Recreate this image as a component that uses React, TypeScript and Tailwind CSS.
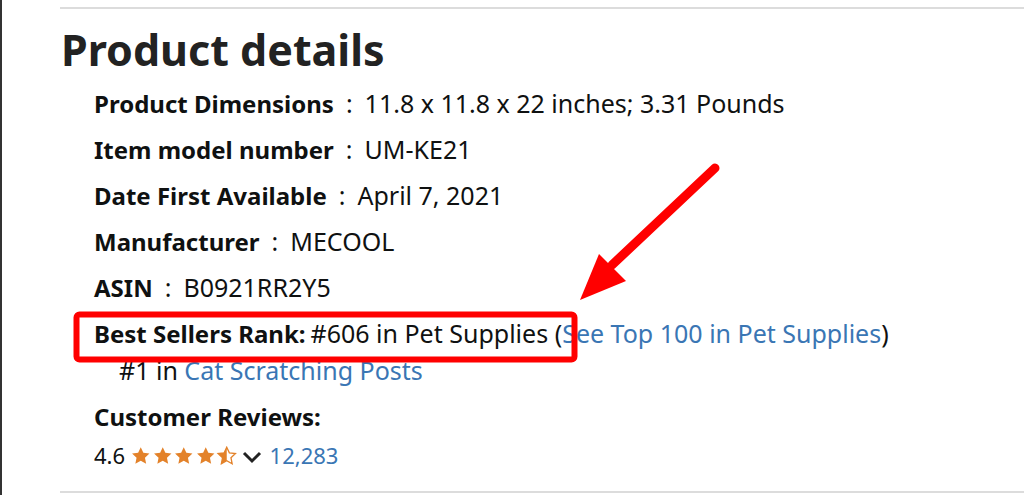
import React from "react";

const font = { fontFamily: '"Noto Sans", "Open Sans", Arial, sans-serif' };

function Star({ half }: { half?: boolean }) {
  const d =
    "M10 1.2l2.6 5.6 6.1.7-4.5 4.2 1.2 6-5.4-3-5.4 3 1.2-6L1.3 7.5l6.1-.7z";
  return (
    <svg width="21.5" height="19" viewBox="0 0 20 19">
      <defs>
        <clipPath id="halfclip">
          <rect x="0" y="0" width="10" height="19" />
        </clipPath>
      </defs>
      {half ? (
        <>
          <path d={d} fill="none" stroke="#e3822a" strokeWidth="1.3" />
          <path d={d} fill="#e3822a" clipPath="url(#halfclip)" />
        </>
      ) : (
        <path d={d} fill="#e3822a" />
      )}
    </svg>
  );
}

function Row({ label, value }: { label: string; value: string }) {
  return (
    <div className="flex h-[46px] items-center text-[24px] text-[#0f1111]">
      <span className="font-bold">{label}</span>
      <span className="mx-[12px] text-[25px]">:</span>
      <span className="text-[25px]">{value}</span>
    </div>
  );
}

export default function App() {
  return (
    <div
      className="relative w-[1024px] h-[495px] bg-white overflow-hidden border-l-2 border-[#333]"
      style={font}
    >
      <div className="ml-[58px] mt-[7px] border-t-2 border-[#dcdcdc] h-[486px] border-b-2 flex flex-col">
        <h2 className="text-[43px] font-bold text-[#222] leading-none mt-[19px] ml-[1px]">
          Product details
        </h2>
        <div className="ml-[34px] mt-[10px]">
          <Row label="Product Dimensions" value="11.8 x 11.8 x 22 inches; 3.31 Pounds" />
          <Row label="Item model number" value="UM-KE21" />
          <Row label="Date First Available" value="April 7, 2021" />
          <Row label="Manufacturer" value="MECOOL" />
          <Row label="ASIN" value="B0921RR2Y5" />
          <div className="flex h-[46px] items-center text-[25px] text-[#0f1111]">
            <span className="font-bold text-[24px]">Best Sellers Rank:</span>
            <span className="ml-[5px]">#606 in Pet Supplies (</span>
            <span className="text-[#3a76b4]">See Top 100 in Pet Supplies</span>
            <span>)</span>
          </div>
          <div className="flex h-[28px] items-center text-[25px] text-[#0f1111] ml-[25px]">
            <span>#1 in&nbsp;</span>
            <span className="text-[#3a76b4]">Cat Scratching Posts</span>
          </div>
          <div className="flex h-[64px] items-center text-[24px] text-[#0f1111] font-bold">
            Customer Reviews:
          </div>
          <div className="flex items-center text-[22px] text-[#0f1111] gap-[3px] -mt-[10px]">
            <span className="mr-[2px]">4.6</span>
            <div className="flex">
              <Star />
              <Star />
              <Star />
              <Star />
              <Star half />
            </div>
            <svg width="22" height="14" viewBox="0 0 22 14" className="mt-[2px]">
              <path d="M3 3l8 8 8-8" fill="none" stroke="#222" strokeWidth="3" />
            </svg>
            <span className="text-[#3a76b4] ml-[4px]">12,283</span>
          </div>
        </div>
      </div>
      <svg
        className="absolute left-0 top-0 pointer-events-none"
        width="1024"
        height="495"
        viewBox="0 0 1024 495"
      >
        <rect
          x="74.5"
          y="314.5"
          width="498"
          height="45"
          rx="3"
          fill="none"
          stroke="#ff0000"
          strokeWidth="6"
        />
        <line
          x1="713"
          y1="168"
          x2="610"
          y2="265"
          stroke="#ff0000"
          strokeWidth="9"
          strokeLinecap="round"
        />
        <polygon points="578,300 597,254 624,281" fill="#ff0000" />
      </svg>
    </div>
  );
}
